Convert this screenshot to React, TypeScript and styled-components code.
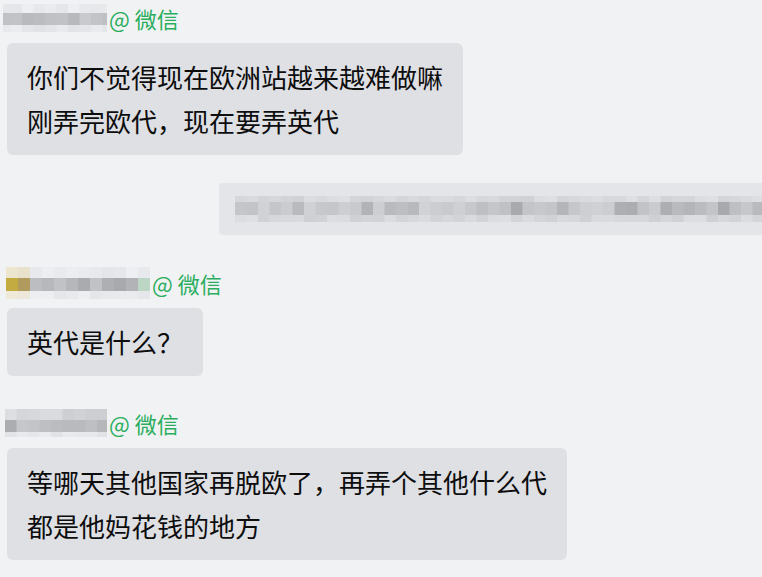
import React from "react";
import styled, { createGlobalStyle } from "styled-components";

const Global = createGlobalStyle`
  html, body { margin: 0; padding: 0; background: #f1f2f4; }
  body { font-family: "Noto Sans CJK SC", "Noto Sans", sans-serif; }
`;

const Page = styled.div`
  width: 762px;
  height: 577px;
  overflow: hidden;
  background: #f1f2f4;
  display: flex;
  flex-direction: column;
  align-items: flex-start;
  padding-top: 4px;
  box-sizing: border-box;
`;

const Group = styled.div<{ $top: number }>`
  display: flex;
  flex-direction: column;
  align-items: flex-start;
  gap: 11px;
  margin-top: ${(p) => p.$top}px;
`;

const NameRow = styled.div<{ $left: number }>`
  display: flex;
  align-items: center;
  height: 28px;
  padding-left: ${(p) => p.$left}px;
  gap: 2px;
`;

const Source = styled.span`
  color: #2aae5e;
  font-family: "Noto Sans CJK SC", "Noto Sans", sans-serif;
  font-size: 22px;
  line-height: 28px;
  white-space: pre;
`;

const Bubble = styled.div`
  margin-left: 7px;
  background: #dfe0e4;
  border-radius: 6px;
  padding: 12px 20px;
  font-size: 26px;
  line-height: 44px;
  color: #0d0d0d;
  white-space: nowrap;
`;

const RightRow = styled.div`
  align-self: stretch;
  display: flex;
  justify-content: flex-end;
  margin-top: 28px;
`;

const RightBubble = styled.div`
  width: 543px;
  height: 52px;
  background: #e3e5e9;
  border-radius: 4px 0 0 4px;
  display: flex;
  align-items: center;
  padding-left: 16px;
  box-sizing: border-box;
  overflow: hidden;
`;

type MosaicProps = {
  width: number;
  height: number;
  cell: number;
  rows: { h: number; colors: string[] }[];
  offsetX?: number;
};

const Mosaic: React.FC<MosaicProps> = ({ width, height, cell, rows, offsetX = 0 }) => {
  let y = 0;
  return (
    <svg width={width} height={height} style={{ display: "block", flexShrink: 0 }}>
      {rows.map((r, ri) => {
        const top = y;
        y += r.h;
        return r.colors.map((c, ci) => (
          <rect key={`${ri}-${ci}`} x={offsetX + ci * cell} y={top} width={cell + 0.5} height={r.h} fill={c} />
        ));
      })}
    </svg>
  );
};

const g = (v: number) => `rgb(${v},${v + 1},${v + 4})`;
const seq = (n: number, seed: number, lo: number, hi: number) => {
  const out: string[] = [];
  let s = seed;
  for (let i = 0; i < n; i++) {
    s = (s * 9301 + 49297) % 233280;
    out.push(g(Math.round(lo + (s / 233280) * (hi - lo))));
  }
  return out;
};

const name1 = [
  { h: 9, colors: seq(10, 3, 226, 238) },
  { h: 12, colors: seq(10, 7, 182, 204) },
  { h: 7, colors: seq(10, 11, 224, 236) },
];

const name2 = [
  { h: 11, colors: ["#ece6cf", "#e8e2cc", ...seq(10, 5, 228, 238)] },
  { h: 13, colors: ["#c3ab42", "#b19a5e", ...seq(9, 13, 166, 196), "#bcd6c6"] },
  { h: 8, colors: ["#eee9d8", "#ece7d8", ...seq(10, 17, 228, 238)] },
];

const name3 = [
  { h: 11, colors: seq(9, 19, 200, 222) },
  { h: 12, colors: seq(9, 23, 168, 200) },
  { h: 5, colors: seq(9, 29, 222, 234) },
];

const strip = [
  { h: 6, colors: seq(46, 31, 208, 222) },
  { h: 13, colors: seq(46, 37, 168, 210) },
  { h: 7, colors: seq(46, 41, 206, 222) },
];

export default function App() {
  return (
    <>
      <Global />
      <Page>
        <Group $top={0}>
          <NameRow $left={3}>
            <Mosaic width={104} height={28} cell={11.5} rows={name1} offsetX={-4} />
            <Source>@ 微信</Source>
          </NameRow>
          <Bubble>
            你们不觉得现在欧洲站越来越难做嘛
            <br />
            刚弄完欧代，现在要弄英代
          </Bubble>
        </Group>
        <RightRow>
          <RightBubble>
            <Mosaic width={530} height={26} cell={11.5} rows={strip} />
          </RightBubble>
        </RightRow>
        <Group $top={34}>
          <NameRow $left={5}>
            <Mosaic width={145} height={32} cell={12} rows={name2} offsetX={1} />
            <Source>@ 微信</Source>
          </NameRow>
          <Bubble>英代是什么？</Bubble>
        </Group>
        <Group $top={33}>
          <NameRow $left={5}>
            <Mosaic width={102} height={28} cell={11.5} rows={name3} />
            <Source>@ 微信</Source>
          </NameRow>
          <Bubble>
            等哪天其他国家再脱欧了，再弄个其他什么代
            <br />
            都是他妈花钱的地方
          </Bubble>
        </Group>
      </Page>
    </>
  );
}
